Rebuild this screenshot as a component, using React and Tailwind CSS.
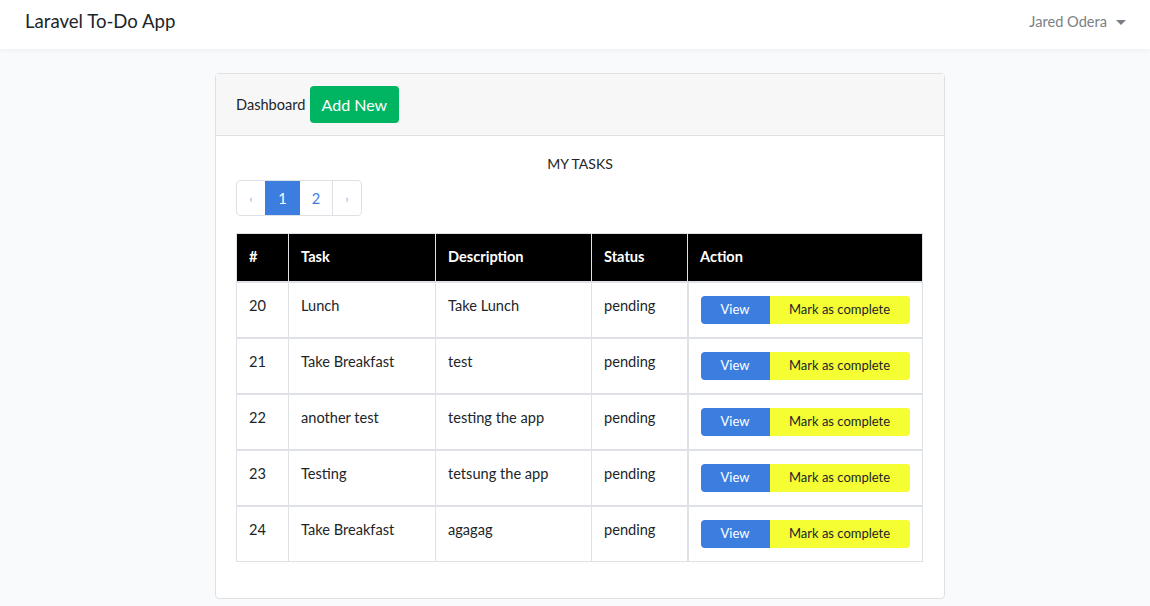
import React from "react";

const tasks = [
  { id: 20, task: "Lunch", desc: "Take Lunch", status: "pending" },
  { id: 21, task: "Take Breakfast", desc: "test", status: "pending" },
  { id: 22, task: "another test", desc: "testing the app", status: "pending" },
  { id: 23, task: "Testing", desc: "tetsung the app", status: "pending" },
  { id: 24, task: "Take Breakfast", desc: "agagag", status: "pending" },
];

export default function App() {
  return (
    <div
      className="min-h-[606px] bg-[#f8fafc] text-[#212529] text-[14.6px] leading-[1.6]"
      style={{ fontFamily: "Lato, 'Noto Sans', sans-serif" }}
    >
      <Navbar />
      <main className="pt-6 pl-[10px] flex justify-center">
        <div className="w-[730px] bg-white border border-[#e0e0e0] rounded-[4px]">
          {/* card header */}
          <div className="h-[62px] bg-[#f7f7f7] border-b border-[#e0e0e0] px-5 flex items-center">
            <span className="text-[#212529]">Dashboard</span>
            <button className="ml-1 h-[37px] px-3 bg-[#00b562] text-white text-[16px] rounded-[4px]">
              Add New
            </button>
          </div>

          {/* card body */}
          <div className="px-5 pt-[17px] pb-9">
            <div className="text-center text-[14px]">MY TASKS</div>

            <ul className="mt-[5px] flex w-fit border border-[#dee2e6] rounded-[4px] h-[36px]">
              <li className="w-[28px] flex items-center justify-center text-[#8ab0ea] text-[12px]">‹</li>
              <li className="w-[35px] flex items-center justify-center bg-[#3c7ee0] text-white">1</li>
              <li className="w-[33px] flex items-center justify-center text-[#3c7ee0] border-r border-[#dee2e6]">2</li>
              <li className="w-[28px] flex items-center justify-center text-[#8ab0ea] text-[12px]">›</li>
            </ul>

            <table className="mt-[17px] w-[687px] border-collapse border border-[#dee2e6]">
              <thead>
                <tr className="bg-black text-white font-bold h-[48px]">
                  <th className="w-[52px] text-left px-3 pb-px border border-[#dee2e6]">#</th>
                  <th className="w-[147px] text-left px-3 pb-px border border-[#dee2e6]">Task</th>
                  <th className="w-[156px] text-left px-3 pb-px border border-[#dee2e6]">Description</th>
                  <th className="w-[96px] text-left px-3 pb-px border border-[#dee2e6]">Status</th>
                  <th className="text-left px-3 pb-px border border-[#dee2e6]">Action</th>
                </tr>
              </thead>
              <tbody>
                {tasks.map((t) => (
                  <tr key={t.id} className="h-[56px] border-t-2 border-[#dee2e6]">
                    <td className="align-top px-3 pt-[11px] border border-[#dee2e6]">{t.id}</td>
                    <td className="align-top px-3 pt-[11px] border border-[#dee2e6]">{t.task}</td>
                    <td className="align-top px-3 pt-[11px] border border-[#dee2e6]">{t.desc}</td>
                    <td className="align-top px-3 pt-[11px] border border-[#dee2e6]">{t.status}</td>
                    <td className="align-top px-3 pt-[13px] border border-l-2 border-[#dee2e6]">
                      <div className="flex h-[28px] text-[13px] rounded-[4px] overflow-hidden w-fit">
                        <span className="w-[69px] bg-[#3c7ee0] text-white flex items-center justify-center">
                          View
                        </span>
                        <span className="w-[140px] bg-[#f5fd33] text-[#212529] flex items-center justify-center">
                          Mark as complete
                        </span>
                      </div>
                    </td>
                  </tr>
                ))}
              </tbody>
            </table>
          </div>
        </div>
      </main>
    </div>
  );
}

function Navbar() {
  return (
    <nav className="h-[49px] pb-[5px] bg-white shadow-[0_2px_4px_rgba(0,0,0,0.04)] flex items-center justify-between pl-[25px] pr-[24px]">
      <span className="text-[18.6px] text-[#212529]">Laravel To-Do App</span>
      <span className="flex items-center text-[#7a7f85] text-[14.6px]">
        Jared Odera
        <span className="ml-[9px] w-0 h-0 border-x-[5px] border-x-transparent border-t-[5px] border-t-[#7a7f85]" />
      </span>
    </nav>
  );
}
